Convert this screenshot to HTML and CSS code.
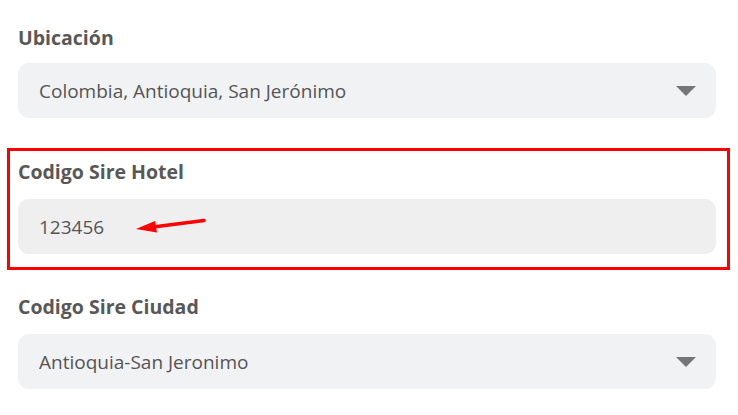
FILE: index.html
```html
<!DOCTYPE html>
<html lang="es">
<head>
<meta charset="utf-8">
<link rel="stylesheet" href="styles.css">
</head>
<body>
<div class="form">
  <div class="field field-first">
    <div class="label">Ubicación</div>
    <div class="input select">
      <span class="value">Colombia, Antioquia, San Jerónimo</span>
      <span class="caret"></span>
    </div>
  </div>
  <div class="highlight">
    <div class="field">
      <div class="label">Codigo Sire Hotel</div>
      <div class="input text">
        <span class="value">123456</span>
        <svg class="pointer" width="72" height="18" viewBox="0 0 72 18">
          <path d="M69 2.5 L18 9" stroke="#ff0000" stroke-width="3.4" stroke-linecap="round" fill="none"/>
          <path d="M1 11 L20 3 L22 14.5 Z" fill="#ff0000"/>
        </svg>
      </div>
    </div>
  </div>
  <div class="field field-last">
    <div class="label">Codigo Sire Ciudad</div>
    <div class="input select">
      <span class="value">Antioquia-San Jeronimo</span>
      <span class="caret"></span>
    </div>
  </div>
</div>
</body>
</html>
```
FILE: styles.css
```css
html, body {
  margin: 0;
  padding: 0;
  background: #ffffff;
}
body {
  font-family: "Open Sans", "Noto Sans", sans-serif;
  color: #555555;
}
.form {
  padding: 25px 22px 0 18px;
  display: flex;
  flex-direction: column;
}
.field {
  display: flex;
  flex-direction: column;
}
.label {
  font-size: 19.5px;
  font-weight: 700;
  line-height: 26px;
  color: #585858;
  margin-bottom: 14px;
}
.field-first .label {
  margin-bottom: 12px;
}
.input {
  height: 55px;
  border-radius: 11px;
  display: flex;
  align-items: center;
  padding: 0 20px 0 21px;
  font-size: 19px;
  color: #555555;
}
.select {
  background: #f1f2f4;
  justify-content: space-between;
}
.text {
  background: #efefef;
}
.value {
  line-height: 26px;
}
.caret {
  width: 0;
  height: 0;
  border-left: 10px solid transparent;
  border-right: 10px solid transparent;
  border-top: 10px solid #767676;
}
.pointer {
  margin-left: 31px;
}
.highlight {
  margin: 30px -14px 0 -11px;
  border: 3px solid #ff0000;
  padding: 8px 11px 13px 8px;
}
.field-last {
  margin-top: 24px;
}
```
